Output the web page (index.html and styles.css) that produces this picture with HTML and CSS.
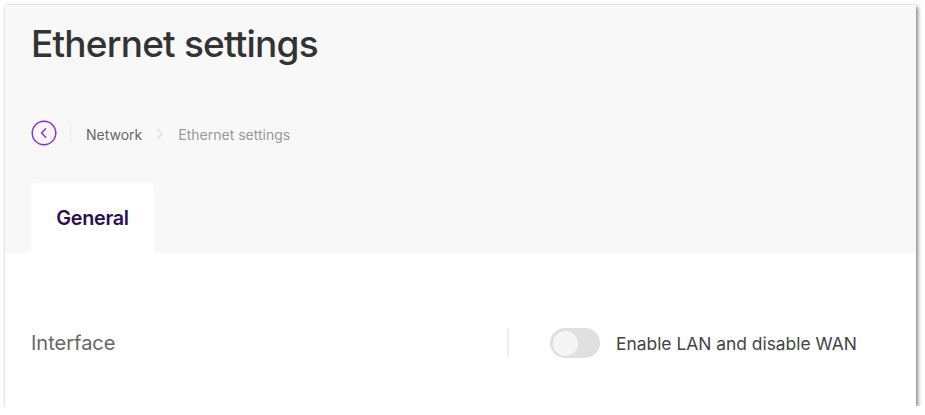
FILE: index.html
```html
<!DOCTYPE html>
<html>
<head>
<meta charset="utf-8">
<link rel="stylesheet" href="styles.css">
</head>
<body>
<div class="window">
  <header class="head">
    <h1 class="title">Ethernet settings</h1>
    <nav class="crumbs">
      <span class="back">
        <svg width="26" height="26" viewBox="0 0 26 26"><circle cx="13" cy="13" r="11.8" fill="none" stroke="#8a2be2" stroke-width="1.4"/><path d="M14.6 8.8 L10.6 13 L14.6 17.2" fill="none" stroke="#8a2be2" stroke-width="1.4" stroke-linecap="round" stroke-linejoin="round"/></svg>
      </span>
      <span class="sep"></span>
      <span class="crumb">Network</span>
      <svg class="chev" width="8" height="12" viewBox="0 0 8 12"><path d="M1.5 1 L6 6 L1.5 11" fill="none" stroke="#ddd8e6" stroke-width="1.2"/></svg>
      <span class="crumb current">Ethernet settings</span>
    </nav>
    <div class="tabs">
      <div class="tab active">General</div>
    </div>
  </header>
  <main class="content">
    <div class="row">
      <div class="label">Interface</div>
      <div class="vline"></div>
      <div class="control">
        <span class="toggle"><span class="knob"></span></span>
        <span class="ctext">Enable LAN and disable WAN</span>
      </div>
    </div>
  </main>
</div>
</body>
</html>
```
FILE: styles.css
```css
html, body { margin: 0; padding: 0; background: #fff; }
body { font-family: Inter, "Noto Sans", sans-serif; }
.window {
  margin: 5px 0 0 5px;
  width: 911px;
  height: 401px;
  background: #fff;
  box-shadow: 2px 2px 4px rgba(0,0,0,0.45), 0 0 3px rgba(0,0,0,0.12);
  display: flex;
  flex-direction: column;
  overflow: hidden;
}
.head {
  background: #f8f8f8;
  padding: 15px 0 0 26px;
  height: 248px;
  box-sizing: border-box;
  display: flex;
  flex-direction: column;
}
.title {
  margin: 0;
  font-size: 37px;
  line-height: 48px;
  font-weight: 500;
  color: #333;
  letter-spacing: -0.8px;
}
.crumbs {
  margin-top: 53px;
  display: flex;
  align-items: center;
  height: 26px;
}
.back { display: flex; width: 26px; height: 26px; margin-top: -2px; }
.sep { width: 1px; height: 16px; background: #e6e6e6; margin: 0 15px 0 13px; }
.crumb { font-size: 14px; color: #666; }
.crumb.current { color: #999; }
.chev { margin: 0 14px 0 14px; }
.tabs { margin-top: 36px; display: flex; }
.tab {
  width: 123px;
  height: 70px;
  display: flex;
  align-items: center;
  justify-content: center;
  background: #fff;
  border-radius: 4px 4px 0 0;
  font-size: 19.8px;
  font-weight: 600;
  color: #2b0f55;
  letter-spacing: -0.3px;
}
.content { padding: 75px 0 0 26px; }
.row { display: flex; align-items: center; height: 30px; }
.label { width: 476px; font-size: 20px; color: #666; }
.vline { width: 2px; height: 30px; background: #eee; }
.control { display: flex; align-items: center; margin-left: 41px; }
.toggle {
  width: 50px; height: 30px; border-radius: 15px; background: #e0e0e0;
  display: flex; align-items: center; padding-left: 3px; box-sizing: border-box;
}
.knob { width: 25px; height: 25px; border-radius: 50%; background: #f5f5f5; }
.ctext { margin-left: 16px; font-size: 17.4px; color: #444; }
```
